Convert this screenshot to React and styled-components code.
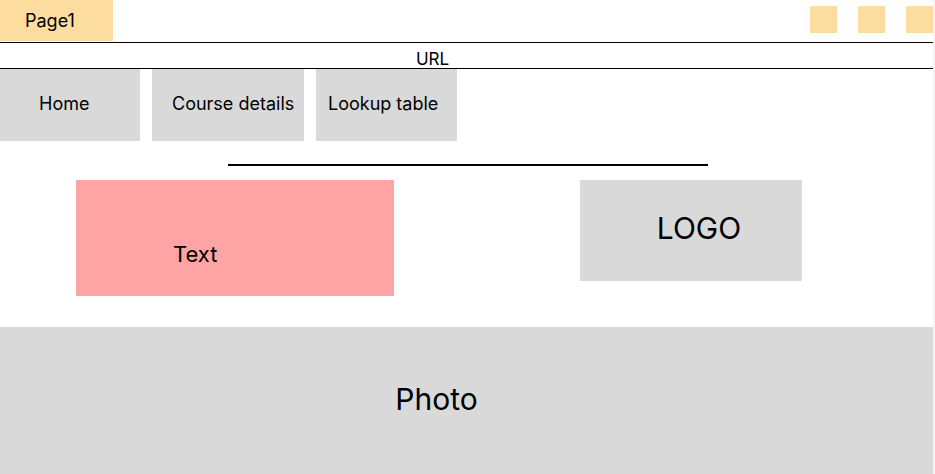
import React from "react";
import styled, { createGlobalStyle } from "styled-components";

const Global = createGlobalStyle`
  body {
    margin: 0;
    background: #f4f4f4;
    font-family: Inter, "Noto Sans", sans-serif;
    color: #000;
  }
`;

export default function App() {
  return (
    <>
      <Global />
      <Page>
        <TopBar>
          <Tab>Page1</Tab>
          <Squares>
            <Square />
            <Square />
            <Square />
          </Squares>
        </TopBar>
        <UrlBar>URL</UrlBar>
        <Nav>
          <NavButton $w={140} $pad={39}>Home</NavButton>
          <NavButton $w={152} $pad={20}>Course details</NavButton>
          <NavButton $w={141} $pad={12}>Lookup table</NavButton>
        </Nav>
        <Divider />
        <Content>
          <TextBox>Text</TextBox>
          <LogoBox>LOGO</LogoBox>
        </Content>
        <Photo>Photo</Photo>
      </Page>
    </>
  );
}

const Page = styled.div`
  width: 933px;
  height: 474px;
  background: #fff;
  display: flex;
  flex-direction: column;
  overflow: hidden;
`;

const TopBar = styled.div`
  height: 42px;
  display: flex;
  justify-content: space-between;
  align-items: flex-start;
`;

const Tab = styled.div`
  width: 113px;
  height: 41px;
  background: #fcdc9f;
  font-size: 18px;
  display: flex;
  align-items: center;
  padding-left: 25px;
  box-sizing: border-box;
`;

const Squares = styled.div`
  display: flex;
  gap: 21px;
  margin-top: 6px;
`;

const Square = styled.div`
  width: 27px;
  height: 27px;
  background: #fcdc9f;
`;

const UrlBar = styled.div`
  height: 25px;
  border-top: 1.5px solid #000;
  border-bottom: 1.5px solid #000;
  font-size: 17px;
  display: flex;
  align-items: flex-end;
  justify-content: center;
  padding-right: 68px;
  line-height: 18px;
`;

const Nav = styled.div`
  display: flex;
  gap: 12px;
  height: 72px;
`;

const NavButton = styled.div`
  width: ${(p) => p.$w}px;
  background: #d9d9d9;
  font-size: 18px;
  display: flex;
  align-items: center;
  padding: 0 0 4px ${(p) => p.$pad}px;
  box-sizing: border-box;
  white-space: nowrap;
`;

const Divider = styled.div`
  width: 480px;
  height: 1.5px;
  background: #000;
  margin: 23px 0 0 228px;
`;

const Content = styled.div`
  display: flex;
  align-items: flex-start;
  padding: 14px 0 0 76px;
  gap: 186px;
  height: 161px;
  box-sizing: border-box;
`;

const TextBox = styled.div`
  width: 318px;
  height: 116px;
  background: #ffa4a4;
  font-size: 22px;
  padding: 61px 0 0 97px;
  box-sizing: border-box;
  line-height: 26px;
`;

const LogoBox = styled.div`
  width: 222px;
  height: 101px;
  background: #d9d9d9;
  font-size: 30px;
  display: flex;
  align-items: center;
  justify-content: center;
  padding: 0 0 4px 16px;
  box-sizing: border-box;
`;

const Photo = styled.div`
  flex: 1;
  background: #d9d9d9;
  font-size: 30px;
  display: flex;
  align-items: center;
  justify-content: center;
  padding: 0 60px 2px 0;
`;
